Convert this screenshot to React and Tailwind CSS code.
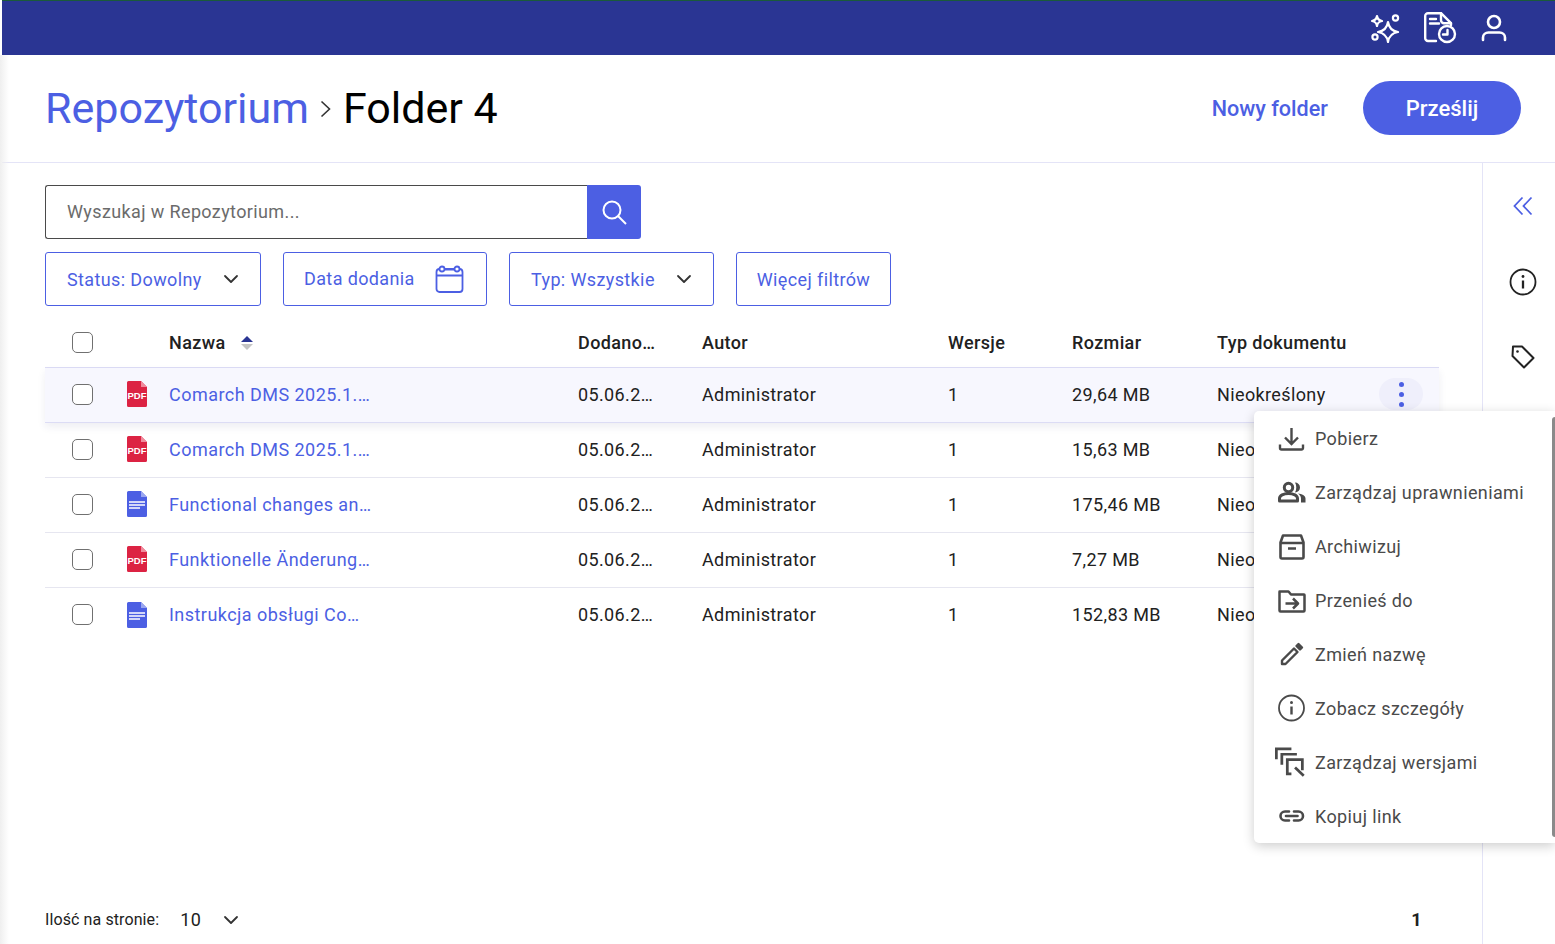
import React from 'react';
import { ChevronDown } from 'lucide-react';

const ROWS = [
  { name: 'Comarch DMS 2025.1.…', type: 'pdf', size: '29,64 MB', active: true },
  { name: 'Comarch DMS 2025.1.…', type: 'pdf', size: '15,63 MB' },
  { name: 'Functional changes an…', type: 'doc', size: '175,46 MB' },
  { name: 'Funktionelle Änderung…', type: 'pdf', size: '7,27 MB' },
  { name: 'Instrukcja obsługi Co…', type: 'doc', size: '152,83 MB' },
];

const GRID = 'grid grid-cols-[124px_409px_124px_246px_124px_145px_222px]';

const Sparkles = () => (
  <svg width="30" height="30" viewBox="0 0 30 30" fill="none" stroke="white" strokeWidth="2.2" strokeLinejoin="round">
    <path d="M17 9c.9 6 3.500 9 10 10-6.500 1-9.100 4-10 10-.9-6-3.500-9-10-10 6.500-1 9.100-4 10-10z" />
    <path d="M6 3c.4 3 1.700 4.500 5 5-3.300.5-4.600 2-5 5-.4-3-1.700-4.500-5-5 3.300-.5 4.600-2 5-5z" />
    <circle cx="24.500" cy="5" r="2.600" />
    <circle cx="4" cy="24" r="2.600" />
  </svg>
);

const DocClock = () => (
  <svg width="34" height="32" viewBox="0 0 34 32" fill="none" stroke="white" strokeWidth="2.4" strokeLinejoin="round" strokeLinecap="round">
    <path d="M12 29H4a2.800 2.800 0 0 1-2.800-2.800V4A2.800 2.800 0 0 1 4 1.200h13l10 10v2" />
    <path d="M17 1.200v7a3 3 0 0 0 3 3h7" />
    <path d="M6 7h6M6 11.500h9" />
    <circle cx="23" cy="22" r="8" />
    <path d="M23.500 18v4.500H19" />
  </svg>
);

const UserIcon = () => (
  <svg width="30" height="30" viewBox="0 0 30 30" fill="none" stroke="white" strokeWidth="2.600" strokeLinecap="round">
    <circle cx="15" cy="9" r="6" />
    <path d="M4 27v-2.500c0-3 2.500-5 5.500-5h11c3 0 5.500 2 5.500 5V27" />
  </svg>
);

const CalendarIcon = () => (
  <svg width="30" height="30" viewBox="0 0 30 30" fill="none" stroke="#4c5fe3" strokeWidth="1.800">
    <rect x="1.500" y="5" width="26" height="23" rx="3" />
    <path d="M1.500 11.500h26M10 5.500h9" />
    <circle cx="7" cy="5" r="2.500" fill="white" />
    <circle cx="22" cy="5" r="2.500" fill="white" />
  </svg>
);

const PdfIcon = () => (
  <div className="relative w-5 h-[26px]">
    <svg width="20" height="26" viewBox="0 0 20 26">
      <path d="M1.500 0H14l6 6v18.500a1.500 1.500 0 0 1-1.500 1.500h-17A1.500 1.500 0 0 1 0 24.500v-23A1.500 1.500 0 0 1 1.500 0z" fill="#dc2343" />
      <path d="M14 0l6 6h-6z" fill="#f08a9c" />
    </svg>
    <span className="absolute left-0 right-0 top-[9px] text-center text-[9.500px] leading-[11px] font-bold tracking-normal text-white font-['Liberation_Sans',sans-serif]">PDF</span>
  </div>
);

const DocIcon = () => (
  <svg width="20" height="26" viewBox="0 0 20 26">
    <path d="M1.500 0H14l6 6v18.500a1.500 1.500 0 0 1-1.500 1.500h-17A1.500 1.500 0 0 1 0 24.500v-23A1.500 1.500 0 0 1 1.500 0z" fill="#4c5fe3" />
    <path d="M14 0l6 6h-6z" fill="#9aa6f0" />
    <path d="M2 11h16M2 14h16M2 17h11" stroke="white" strokeWidth="1.300" />
  </svg>
);

const Checkbox = () => (
  <div className="w-[21px] h-[21px] rounded-[5px] border-[1.500px] border-[#707070] bg-white" />
);

const ICON_COLOR = '#4a4a4a';

const MENU = [
  {
    label: 'Pobierz',
    icon: (
      <svg width="28" height="28" viewBox="0 0 28 28" fill="none" stroke={ICON_COLOR} strokeWidth="2.400">
        <path d="M13.500 3v16M7 12.500l6.500 6.500 6.500-6.500" />
        <path d="M2 19.500v3.500a1.500 1.500 0 0 0 1.500 1.500h20a1.500 1.500 0 0 0 1.500-1.500v-3.500" />
      </svg>
    ),
  },
  {
    label: 'Zarządzaj uprawnieniami',
    icon: (
      <svg width="28" height="28" viewBox="0 0 28 28" fill="none">
        <circle cx="10.500" cy="8.500" r="4.200" stroke={ICON_COLOR} strokeWidth="3" />
        <path d="M1.500 22v-2.500c0-3 4-5 9-5s9 2 9 5V22z" stroke={ICON_COLOR} strokeWidth="3" strokeLinejoin="round" />
        <path d="M17 3.500a5 5 0 0 1 0 10c1.700-2.800 1.700-7.200 0-10zM20 14.500c3.800.5 7.500 2 7.500 5v4H23v-4c0-2-1.200-3.700-3-5z" fill={ICON_COLOR} />
      </svg>
    ),
  },
  {
    label: 'Archiwizuj',
    icon: (
      <svg width="28" height="28" viewBox="0 0 28 28" fill="none" stroke={ICON_COLOR} strokeWidth="2.600" strokeLinejoin="round">
        <path d="M2.500 9.500 5 2.500h18l2.500 7V24a1.500 1.500 0 0 1-1.500 1.500H4A1.500 1.500 0 0 1 2.500 24z" />
        <path d="M2.500 10h23M10 15.500h8" />
      </svg>
    ),
  },
  {
    label: 'Przenieś do',
    icon: (
      <svg width="28" height="28" viewBox="0 0 28 28" fill="none" stroke={ICON_COLOR} strokeWidth="2.500" strokeLinejoin="round">
        <path d="M1.500 4.500h9l2.500 3h13a.5.5 0 0 1 .5.500v15.500a1 1 0 0 1-1 1h-23a1 1 0 0 1-1-1V5a.5.5 0 0 1 .5-.500z" />
        <path d="M7.500 16.500h12M15 11.500l5 5-5 5" />
      </svg>
    ),
  },
  {
    label: 'Zmień nazwę',
    icon: (
      <svg width="28" height="28" viewBox="0 0 28 28" fill="none" stroke={ICON_COLOR} strokeWidth="2.400" strokeLinejoin="round">
        <path d="M4 24v-3.500L16 8.500l3.500 3.500L7.500 24z" />
        <path d="M18.500 6l2-2L24 7.500l-2 2z" fill={ICON_COLOR} />
      </svg>
    ),
  },
  {
    label: 'Zobacz szczegóły',
    icon: (
      <svg width="28" height="28" viewBox="0 0 28 28" fill="none" stroke={ICON_COLOR} strokeWidth="1.800">
        <circle cx="13.500" cy="14" r="12.500" />
        <path d="M13.500 12.500v8" strokeWidth="2.400" />
        <circle cx="13.500" cy="8.500" r="1.500" fill={ICON_COLOR} stroke="none" />
      </svg>
    ),
  },
  {
    label: 'Zarządzaj wersjami',
    icon: (
      <svg width="34" height="34" viewBox="0 0 34 34" fill="none" stroke={ICON_COLOR} strokeWidth="3" className="-ml-[3px] -my-[3px]">
        <path d="M1.500 14V2.500H18" />
        <path d="M7.500 20V8.500H24" />
        <path d="M18 30h-4.500V14.500H30V26" />
        <path d="M22 23l9.500 9" />
      </svg>
    ),
  },
  {
    label: 'Kopiuj link',
    icon: (
      <svg width="28" height="28" viewBox="0 0 28 28" fill="none" stroke={ICON_COLOR} strokeWidth="2.600" strokeLinecap="round">
        <path d="M11 9.500H7a4.500 4.500 0 0 0 0 9h4M16 9.500h4.500a4.500 4.500 0 0 1 0 9H16" />
        <path d="M8 14h11.500" />
      </svg>
    ),
  },
];

const ActionMenu = () => (
  <div className="absolute left-[-228px] top-[33px] z-10 w-[301px] h-[432px] pt-[1px] bg-white rounded-l-[5px] shadow-[0_3px_12px_rgba(0,0,0,0.2)] flex flex-col">
    {MENU.map((item) => (
      <div key={item.label} className="h-[54px] flex items-center pl-[24px] gap-[9px] text-[#4a4a4a]">
        <span className="w-[28px] h-[28px] flex items-center shrink-0">{item.icon}</span>
        <span className="text-[18px]">{item.label}</span>
      </div>
    ))}
    <div className="absolute right-0 top-[6px] bottom-[6px] w-[3px] bg-[#8a8a8a] rounded-l-sm" />
  </div>
);

const Row = ({ row, last }) => (
  <div className={`${GRID} items-center h-[55px] pb-[2px] relative ${last ? '' : 'border-b'} ${row.active ? 'bg-[#f7f7fe] border-[#dcdcf5] shadow-[0_4px_8px_rgba(40,40,100,0.08)]' : 'border-[#e6e6f0]'}`}>
    <div className="flex items-center pl-[27px] gap-[34px]">
      <Checkbox />
      {row.type === 'pdf' ? <PdfIcon /> : <DocIcon />}
    </div>
    <div className="text-[#4c5fe3] tracking-[0.46px]">{row.name}</div>
    <div>05.06.2…</div>
    <div>Administrator</div>
    <div>1</div>
    <div>{row.size}</div>
    <div className="flex items-center justify-between relative">
      <span>Nieokreślony</span>
      {row.active && (
        <>
          <div className="w-[44px] h-[32px] mr-[16px] rounded-full bg-[#efeffb] flex flex-col items-center justify-center gap-[5px]">
            <span className="w-[5px] h-[5px] rounded-full bg-[#4c5fe3]" />
            <span className="w-[5px] h-[5px] rounded-full bg-[#4c5fe3]" />
            <span className="w-[5px] h-[5px] rounded-full bg-[#4c5fe3]" />
          </div>
          <div className="absolute left-[265px] top-0">
            <ActionMenu />
          </div>
        </>
      )}
    </div>
  </div>
);

const FilterBox = ({ children, className }) => (
  <div className={`h-[54px] flex items-center justify-between border border-[#4c5fe3] rounded-[3px] text-[#4c5fe3] text-[18px] ${className}`}>
    {children}
  </div>
);

export default function App() {
  return (
    <div className="relative w-[1555px] h-[944px] overflow-hidden bg-white pl-[2px] flex flex-col text-[18px] tracking-[0.38px] text-[#212121] font-['Roboto',sans-serif]">
      <div className="absolute left-0 top-[55px] bottom-0 w-[9px] bg-gradient-to-r from-[#efefef] to-transparent" />

      <div className="h-[55px] shrink-0 bg-[#2a3593] border-t border-[#1a5a3a] flex items-center justify-end pr-[46px]">
        <Sparkles />
        <div className="ml-[23px] mr-[21px]"><DocClock /></div>
        <UserIcon />
      </div>

      <div className="h-[108px] shrink-0 border-b border-[#e4e4f7] flex items-center justify-between pl-[43px] pr-[34px] pb-[2px] tracking-normal">
        <div className="flex items-center text-[43px] leading-none pt-[2px]">
          <span className="text-[#4c5fe3]">Repozytorium</span>
          <svg width="12" height="18" viewBox="0 0 12 18" fill="none" stroke="#333" strokeWidth="1.600" className="ml-[11px] mr-[11px]">
            <path d="M1.500 1.500l8 7.500-8 7.500" />
          </svg>
          <span className="text-black">Folder 4</span>
        </div>
        <div className="flex items-center gap-[35px]">
          <span className="text-[21.600px] font-medium text-[#4c5fe3] pt-[3px]">Nowy folder</span>
          <button className="w-[158px] h-[54px] pt-[1px] rounded-full bg-[#4c5fe3] text-white text-[22px] font-medium">Prześlij</button>
        </div>
      </div>

      <div className="flex-1 flex min-h-0">
        <div className="w-[1480px] shrink-0 pl-[43px] flex flex-col relative">
          <div className="mt-[22px] flex w-[596px] h-[54px]">
            <div className="flex-1 border border-[#4a4a4a] border-r-0 rounded-l-[3px] flex items-center pl-[21px] pb-[2px] text-[#6b6b6b]">Wyszukaj w Repozytorium...</div>
            <div className="w-[54px] bg-[#4c5fe3] rounded-r-[3px] flex items-center justify-center">
              <svg width="28" height="28" viewBox="0 0 28 28" fill="none" stroke="white" strokeWidth="2">
                <circle cx="12" cy="12" r="8.500" />
                <path d="M18 18l8 8" />
              </svg>
            </div>
          </div>

          <div className="mt-[13px] flex gap-[22px]">
            <FilterBox className="w-[216px] pl-[21px] pr-[17px]">
              <span>Status: Dowolny</span>
              <ChevronDown size={24} color="#333" strokeWidth={1.8} />
            </FilterBox>
            <FilterBox className="w-[204px] pl-[20px] pr-[21px]">
              <span className="-mt-[2px]">Data dodania</span>
              <CalendarIcon />
            </FilterBox>
            <FilterBox className="w-[205px] pl-[21px] pr-[17px]">
              <span>Typ: Wszystkie</span>
              <ChevronDown size={24} color="#333" strokeWidth={1.8} />
            </FilterBox>
            <FilterBox className="w-[155px] justify-center">
              <span>Więcej filtrów</span>
            </FilterBox>
          </div>

          <div className="mt-[14px] w-[1394px]">
            <div className={`${GRID} items-center h-[48px] pb-[2px] border-b border-[#dcdcf5] font-medium`}>
              <div className="pl-[27px]"><Checkbox /></div>
              <div className="flex items-center gap-[14px]">
                <span>Nazwa</span>
                <svg width="14" height="16" viewBox="0 0 14 16">
                  <path d="M7 1l6 6H1z" fill="#2a3593" />
                  <path d="M7 15l6-6H1z" fill="#c4c4c4" />
                </svg>
              </div>
              <div>Dodano…</div>
              <div>Autor</div>
              <div>Wersje</div>
              <div>Rozmiar</div>
              <div>Typ dokumentu</div>
            </div>
            {ROWS.map((row, i) => <Row key={i} row={row} last={i === ROWS.length - 1} />)}
          </div>

          <div className="mt-auto h-[50px] w-[1394px] flex items-center justify-between">
            <div className="flex items-center">
              <span className="text-[16px] tracking-[0.1px] pt-[2px]">Ilość na stronie:</span>
              <span className="ml-[21px]">10</span>
              <ChevronDown size={24} color="#333" strokeWidth={1.8} className="ml-[18px] mt-[2px]" />
            </div>
            <span className="font-bold mr-[17px]">1</span>
          </div>
        </div>

        <div className="flex-1 border-l border-[#e4e4f7] flex flex-col items-center pt-[28px] pl-[8px]">
          <svg width="30" height="30" viewBox="0 0 30 30" fill="none" stroke="#4c5fe3" strokeWidth="1.800">
            <path d="M14.500 6.500 6.500 15l8 8.500M23.500 6.500 15.500 15l8 8.500" />
          </svg>
          <svg width="28" height="28" viewBox="0 0 28 28" fill="none" stroke="#222" strokeWidth="1.800" className="mt-[47px]">
            <circle cx="14" cy="14" r="12.500" />
            <path d="M14 12.500v8" strokeWidth="2.300" />
            <circle cx="14" cy="8.500" r="1.400" fill="#222" stroke="none" />
          </svg>
          <svg width="28" height="28" viewBox="0 0 28 28" fill="none" stroke="#222" strokeWidth="2" strokeLinejoin="round" className="mt-[47px]">
            <path d="M4 3.500h9l11.500 11.500-9.500 9.500L3.500 13z" />
            <circle cx="8.500" cy="8.500" r="1.300" fill="#222" stroke="none" />
          </svg>
        </div>
      </div>
    </div>
  );
}
